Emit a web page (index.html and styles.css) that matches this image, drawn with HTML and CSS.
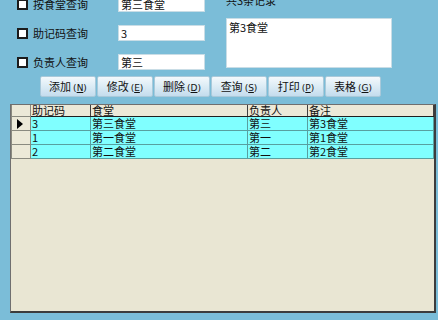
FILE: index.html
```html
<!DOCTYPE html>
<html>

<head>
    <meta charset="utf-8">
    <title>食堂查询</title>
    <link rel="stylesheet" href="styles.css">
</head>

<body>
    <div id="top">
        <div class="query">
            <div class="qrow">
                <span class="check"></span>
                <label>按食堂查询</label>
                <div class="field">第三食堂</div>
            </div>
            <div class="qrow">
                <span class="check"></span>
                <label>助记码查询</label>
                <div class="field">3</div>
            </div>
            <div class="qrow">
                <span class="check"></span>
                <label>负责人查询</label>
                <div class="field">第三</div>
            </div>
        </div>
        <div class="info">
            <div class="count">共3条记录</div>
            <div class="memo">第3食堂</div>
        </div>
    </div>

    <div id="buttons">
        <div class="btn">添加<span class="key">(<u>N</u>)</span></div>
        <div class="btn">修改<span class="key">(<u>E</u>)</span></div>
        <div class="btn">删除<span class="key">(<u>D</u>)</span></div>
        <div class="btn">查询<span class="key">(<u>S</u>)</span></div>
        <div class="btn">打印<span class="key">(<u>P</u>)</span></div>
        <div class="btn">表格<span class="key">(<u>G</u>)</span></div>
    </div>

    <div id="grid">
        <table>
            <colgroup>
                <col class="w-ind">
                <col class="w1">
                <col class="w2">
                <col class="w3">
                <col class="w4">
            </colgroup>
            <tr class="head">
                <td class="ind"></td>
                <td>助记码</td>
                <td>食堂</td>
                <td>负责人</td>
                <td>备注</td>
            </tr>
            <tr>
                <td class="ind"><span class="arrow"></span></td>
                <td>3</td>
                <td>第三食堂</td>
                <td>第三</td>
                <td>第3食堂</td>
            </tr>
            <tr>
                <td class="ind"></td>
                <td>1</td>
                <td>第一食堂</td>
                <td>第一</td>
                <td>第1食堂</td>
            </tr>
            <tr>
                <td class="ind"></td>
                <td>2</td>
                <td>第二食堂</td>
                <td>第二</td>
                <td>第2食堂</td>
            </tr>
        </table>
    </div>
</body>

</html>
```

FILE: styles.css
```css
body {
    margin: 0;
    width: 438px;
    height: 320px;
    overflow: hidden;
    background-color: #7bbdd8;
    font-family: "Noto Sans CJK SC", "Liberation Sans", sans-serif;
    font-size: 11px;
    color: #111;
}

#top {
    display: flex;
    margin-top: -4px;
    height: 80px;
}

.query {
    display: flex;
    flex-direction: column;
    gap: 13px;
    padding-left: 17px;
}

.qrow {
    display: flex;
    align-items: center;
    height: 16px;
}

.check {
    width: 11px;
    height: 11px;
    box-sizing: border-box;
    border: 2px solid #1c1c1c;
    background-color: white;
}

label {
    margin-left: 5px;
    width: 85px;
    line-height: 16px;
}

.field {
    width: 87px;
    height: 16px;
    box-sizing: border-box;
    border: 1px solid #c9dde6;
    background-color: white;
    padding-left: 2px;
    line-height: 14px;
}

.info {
    margin-left: 21px;
}

.count {
    margin-top: -3px;
    line-height: 14px;
}

.memo {
    margin-top: 11px;
    width: 166px;
    height: 50px;
    box-sizing: border-box;
    border: 1px solid #c9dde6;
    background-color: white;
    padding: 1px 2px;
    line-height: 14px;
}

#buttons {
    display: flex;
    gap: 1px;
    margin-left: 40px;
    height: 21px;
}

.btn {
    width: 56px;
    height: 21px;
    box-sizing: border-box;
    border: 1px solid #a9c9da;
    border-radius: 2px;
    background: linear-gradient(#f4f9fc, #d9eaf4 55%, #c4dced);
    text-align: center;
    line-height: 19px;
    font-size: 11px;
}

.key {
    margin-left: 2px;
    font-family: "DejaVu Sans", sans-serif;
    font-size: 9px;
}

#grid {
    margin: 7px 2px 0 10px;
    height: 209px;
    box-sizing: border-box;
    border-top: 1px solid #6f6f6f;
    border-left: 1px solid #6f6f6f;
    border-right: 2px solid #3c3c3c;
    border-bottom: 2px solid #3c3c3c;
    background-color: #e9e6d3;
}

table {
    border-collapse: collapse;
    table-layout: fixed;
    width: 422px;
}

.w-ind {
    width: 19px;
}

.w1 {
    width: 60px;
}

.w2 {
    width: 157px;
}

.w3 {
    width: 60px;
}

.w4 {
    width: 126px;
}

td {
    height: 13px;
    padding: 0 0 0 1px;
    border: 1px solid #58a0a0;
    line-height: 13px;
    white-space: nowrap;
    overflow: hidden;
    background-color: #80ffff;
}

.head td {
    height: 11px;
    line-height: 11px;
    background-color: #ece9d8;
    border-color: #404040;
    border-top: none;
    border-bottom: 1px solid #202020;
}

td.ind {
    background-color: #ece9d8;
    border-color: #8a8a80;
}

.arrow {
    display: block;
    margin-left: 4px;
    width: 0;
    height: 0;
    border-top: 5px solid transparent;
    border-bottom: 5px solid transparent;
    border-left: 6px solid #000;
}
```
